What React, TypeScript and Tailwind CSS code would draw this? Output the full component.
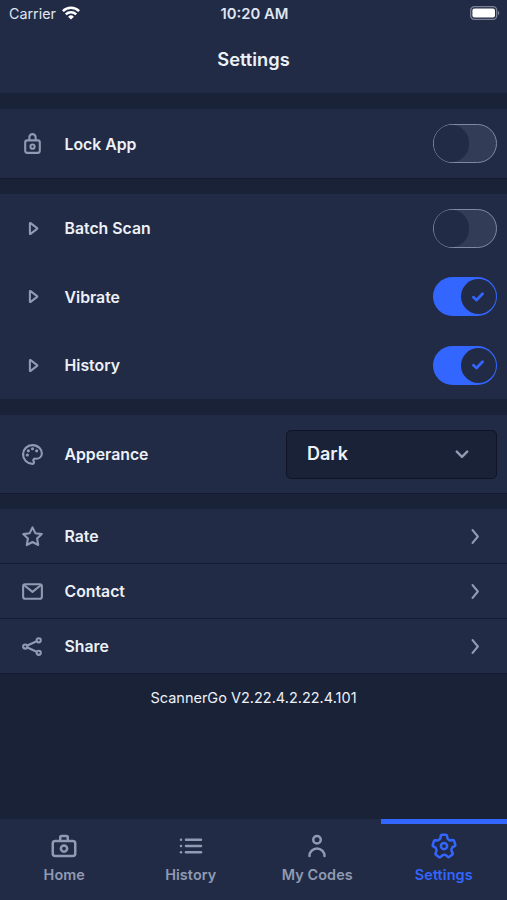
import React, { useState } from 'react';

type IconProps = { className?: string };

const LockIcon = () => (
  <svg viewBox="0 0 24 24" className="h-[25px] w-[25px]" fill="none" stroke="currentColor" strokeWidth="2">
    <rect x="5" y="9" width="14" height="12" rx="2" />
    <path d="M9 9V6a3 3 0 0 1 6 0v3" />
    <circle cx="12" cy="15" r="2" />
  </svg>
);

const PlayIcon = () => (
  <svg viewBox="0 0 24 24" className="h-[25px] w-[25px]" fill="none" stroke="currentColor" strokeWidth="2" strokeLinejoin="round">
    <path d="M9.5 7.2v9.6a.4.4 0 0 0 .7.3l6.2-4.7a.5.5 0 0 0 0-.8l-6.2-4.7a.4.4 0 0 0-.7.3z" />
  </svg>
);

const PaletteIcon = () => (
  <svg viewBox="0 0 24 24" className="h-[25px] w-[25px]" fill="currentColor">
    <path d="M19.54 5.08A10.61 10.61 0 0 0 11.91 2a10 10 0 0 0-.05 20 2.58 2.58 0 0 0 2.53-1.89 2.52 2.52 0 0 0-.57-2.28.5.5 0 0 1 .37-.83h1.65A6.15 6.15 0 0 0 22 11.33a8.48 8.48 0 0 0-2.46-6.25zM15.88 15h-1.65a2.49 2.49 0 0 0-1.87 4.15.49.49 0 0 1 .12.49c-.05.21-.28.34-.59.36a8 8 0 0 1-7.82-9.11A8.1 8.1 0 0 1 11.92 4H12a8.47 8.47 0 0 1 6.1 2.48 6.5 6.5 0 0 1 1.9 4.77A4.17 4.17 0 0 1 15.88 15z" />
    <circle cx="12" cy="6.5" r="1.5" />
    <circle cx="16" cy="8.5" r="1.5" />
    <circle cx="8" cy="8.5" r="1.5" />
    <circle cx="7" cy="12.5" r="1.5" />
  </svg>
);

const StarIcon = () => (
  <svg viewBox="0 0 24 24" className="h-[25px] w-[25px]" fill="none" stroke="currentColor" strokeWidth="2" strokeLinejoin="round">
    <path d="M12 3.2l2.7 5.6 6.2.9-4.5 4.3 1.1 6.2-5.5-2.9-5.5 2.9L7.6 14 3.1 9.7l6.2-.9z" />
  </svg>
);

const MailIcon = () => (
  <svg viewBox="0 0 24 24" className="h-[25px] w-[25px]" fill="none" stroke="currentColor" strokeWidth="2" strokeLinejoin="round">
    <rect x="3" y="5" width="18" height="14" rx="2" />
    <path d="M4 6l8 6.4L20 6" />
  </svg>
);

const ShareIcon = () => (
  <svg viewBox="0 0 24 24" className="h-[25px] w-[25px]" fill="none" stroke="currentColor" strokeWidth="2">
    <circle cx="5" cy="12" r="2" />
    <circle cx="18" cy="6" r="2" />
    <circle cx="18" cy="18" r="2" />
    <path d="M7 11.1l9-4.1M7 12.9l9 4.1" />
  </svg>
);

const CameraIcon = () => (
  <svg viewBox="0 0 24 24" className="h-[30px] w-[30px]" fill="none" stroke="currentColor" strokeWidth="2">
    <rect x="3" y="8" width="18" height="12" rx="2" />
    <path d="M9 8V5a1 1 0 0 1 1-1h4a1 1 0 0 1 1 1v3" />
    <circle cx="12" cy="14" r="2.5" />
  </svg>
);

const ListIcon = () => (
  <svg viewBox="0 0 24 24" className="h-[30px] w-[30px]" fill="currentColor">
    <circle cx="4" cy="7" r="1" />
    <circle cx="4" cy="12" r="1" />
    <circle cx="4" cy="17" r="1" />
    <rect x="7" y="6" width="14" height="2" rx=".94" />
    <rect x="7" y="11" width="14" height="2" rx=".94" />
    <rect x="7" y="16" width="14" height="2" rx=".94" />
  </svg>
);

const PersonIcon = () => (
  <svg viewBox="0 0 24 24" className="h-[30px] w-[30px]" fill="currentColor">
    <path d="M12 11a4 4 0 1 0-4-4 4 4 0 0 0 4 4zm0-6a2 2 0 1 1-2 2 2 2 0 0 1 2-2zM12 13a7 7 0 0 0-7 7 1 1 0 0 0 2 0 5 5 0 0 1 10 0 1 1 0 0 0 2 0 7 7 0 0 0-7-7z" />
  </svg>
);

const GearIcon = () => (
  <svg viewBox="0 0 24 24" className="h-[30px] w-[30px]" fill="currentColor">
    <path d="M8.61 22a2.25 2.25 0 0 1-1.35-.46L5.19 20a2.37 2.37 0 0 1-.49-3.22 2.06 2.06 0 0 0 .23-1.86l-.06-.16a1.83 1.83 0 0 0-1.12-1.22h-.16a2.34 2.34 0 0 1-1.48-2.94L2.93 8a2.18 2.18 0 0 1 1.12-1.41 2.14 2.14 0 0 1 1.68-.12 1.93 1.93 0 0 0 1.78-.29l.13-.1a1.94 1.94 0 0 0 .73-1.51v-.24A2.32 2.32 0 0 1 10.66 2h2.55a2.26 2.26 0 0 1 1.6.67 2.37 2.37 0 0 1 .68 1.68v.28a1.76 1.76 0 0 0 .69 1.43l.11.08a1.74 1.74 0 0 0 1.59.26l.34-.11A2.26 2.26 0 0 1 21.1 7.8l.79 2.52a2.36 2.36 0 0 1-1.46 2.93l-.2.07A1.89 1.89 0 0 0 19 14.6a2 2 0 0 0 .25 1.65l.26.38a2.38 2.38 0 0 1-.5 3.23L17 21.41a2.24 2.24 0 0 1-3.22-.53l-.12-.17a1.75 1.75 0 0 0-1.5-.78 1.8 1.8 0 0 0-1.43.77l-.23.33A2.25 2.25 0 0 1 9 22a2 2 0 0 1-.39 0zM4.4 11.62a3.83 3.83 0 0 1 2.38 2.5v.12a4 4 0 0 1-.46 3.62.38.38 0 0 0 0 .51L8.47 20a.25.25 0 0 0 .37-.07l.23-.33a3.77 3.77 0 0 1 6.2 0l.12.18a.3.3 0 0 0 .18.12.25.25 0 0 0 .19-.05l2.06-1.56a.36.36 0 0 0 .07-.49l-.26-.38A4 4 0 0 1 17.1 14a3.92 3.92 0 0 1 2.49-2.61l.2-.07a.34.34 0 0 0 .19-.44l-.78-2.49a.35.35 0 0 0-.2-.19.21.21 0 0 0-.19 0l-.34.11a3.74 3.74 0 0 1-3.43-.57L15 7.65a3.76 3.76 0 0 1-1.49-3v-.31a.37.37 0 0 0-.1-.26.31.31 0 0 0-.21-.08h-2.54a.31.31 0 0 0-.29.33v.25a3.9 3.9 0 0 1-1.52 3.09l-.13.1a3.91 3.91 0 0 1-3.63.59.22.22 0 0 0-.14 0 .28.28 0 0 0-.12.15L4 11.12a.36.36 0 0 0 .22.45z" />
    <path d="M12 15.5a3.5 3.5 0 1 1 3.5-3.5 3.5 3.5 0 0 1-3.5 3.5zm0-5a1.5 1.5 0 1 0 1.5 1.5 1.5 1.5 0 0 0-1.5-1.5z" />
  </svg>
);

const ChevronRight = ({ className }: IconProps) => (
  <svg viewBox="0 0 8 14" className={className} fill="none" stroke="currentColor" strokeWidth="2" strokeLinecap="round" strokeLinejoin="round">
    <path d="M1.3 1.1L6.2 7l-4.9 5.9" />
  </svg>
);

function StatusBar() {
  return (
    <div className="flex h-7 items-center pl-[9px] pr-[7px] text-[14.8px] text-[#dfe5f2]">
      <div className="flex flex-1 items-center gap-1.5">
        <span className="text-[14.3px]">Carrier</span>
        <svg viewBox="0 0 18 14" className="-mt-0.5 h-[14px] w-[18px]" fill="none" stroke="white" strokeWidth="2.5">
          <path d="M.9 5.1a11.6 11.6 0 0 1 16.2 0" />
          <path d="M3.8 8.3a7.4 7.4 0 0 1 10.4 0" />
          <path d="M9 13.6L6.1 10.7a4.2 4.2 0 0 1 5.8 0z" fill="white" stroke="none" />
        </svg>
      </div>
      <span className="font-semibold">10:20 AM</span>
      <div className="flex flex-1 justify-end">
        <svg viewBox="0 0 30 14" className="-mt-0.5 h-[14px] w-[30px]">
          <rect x=".7" y=".7" width="26" height="12.6" rx="3.6" fill="none" stroke="#7b8194" strokeWidth="1.3" />
          <rect x="2.4" y="2.4" width="22.6" height="9.2" rx="2" fill="white" />
          <path d="M28 4.8c1.8.8 1.8 3.6 0 4.4z" fill="#7b8194" />
        </svg>
      </div>
    </div>
  );
}

function Toggle({ checked, onChange }: { checked: boolean; onChange: () => void }) {
  if (checked) {
    return (
      <button
        type="button"
        onClick={onChange}
        className="flex h-[39px] w-16 items-center justify-end rounded-full bg-[#3366ff] pr-[1.5px]"
      >
        <span className="flex h-[35px] w-[35px] items-center justify-center rounded-full bg-[#222b45] text-[#3366ff]">
          <svg viewBox="0 0 12 10" className="h-[10px] w-3" fill="none" stroke="currentColor" strokeWidth="2.8" strokeLinecap="round" strokeLinejoin="round">
            <path d="M1.5 5.2l3 2.9 6-6.3" />
          </svg>
        </span>
      </button>
    );
  }

  return (
    <button
      type="button"
      onClick={onChange}
      className="flex h-[39px] w-16 items-center rounded-full border border-[#7d89a5] bg-[#333c56]"
    >
      <span className="h-[37px] w-[35px] rounded-full bg-[#222b45]" />
    </button>
  );
}

type RowProps = {
  icon: React.ReactNode;
  label: string;
  className: string;
  children: React.ReactNode;
};

function Row({ icon, label, className, children }: RowProps) {
  return (
    <div className={`flex items-center pl-5 ${className}`}>
      <span className="text-[#8f9bb3]">{icon}</span>
      <span className="ml-[19.5px] flex-1 pt-0.5 text-[15.8px] leading-6 font-semibold">{label}</span>
      {children}
    </div>
  );
}

export default function App() {
  const [lockApp, setLockApp] = useState(false);
  const [batchScan, setBatchScan] = useState(false);
  const [vibrate, setVibrate] = useState(true);
  const [history, setHistory] = useState(true);
  const [activeTab, setActiveTab] = useState('Settings');

  const links = [
    { label: 'Rate', icon: <StarIcon /> },
    { label: 'Contact', icon: <MailIcon /> },
    { label: 'Share', icon: <ShareIcon /> },
  ];

  const tabs = [
    { label: 'Home', icon: <CameraIcon /> },
    { label: 'History', icon: <ListIcon /> },
    { label: 'My Codes', icon: <PersonIcon /> },
    { label: 'Settings', icon: <GearIcon /> },
  ];

  return (
    <div className="flex h-screen flex-col bg-[#1a2238] font-['Inter',sans-serif] text-[#edf1f7]">
      <header className="h-[93px] bg-[#222b45]">
        <StatusBar />
        <h1 className="pt-[17px] text-center text-[18.3px] leading-7 font-semibold">Settings</h1>
      </header>

      <main className="flex flex-1 flex-col gap-[15px] pt-4">
        <section className="border-b border-[#151a30] bg-[#222b45]">
          <Row icon={<LockIcon />} label="Lock App" className="h-[69px] pr-2.5">
            <Toggle checked={lockApp} onChange={() => setLockApp(!lockApp)} />
          </Row>
        </section>

        {/* Scan options */}
        <section className="mb-px bg-[#222b45]">
          <Row icon={<PlayIcon />} label="Batch Scan" className="h-[68px] pr-2.5">
            <Toggle checked={batchScan} onChange={() => setBatchScan(!batchScan)} />
          </Row>
          <Row icon={<PlayIcon />} label="Vibrate" className="h-[69px] pr-2.5">
            <Toggle checked={vibrate} onChange={() => setVibrate(!vibrate)} />
          </Row>
          <Row icon={<PlayIcon />} label="History" className="h-[68px] pr-2.5">
            <Toggle checked={history} onChange={() => setHistory(!history)} />
          </Row>
        </section>

        <section className="border-b border-[#151a30] bg-[#222b45]">
          <Row icon={<PaletteIcon />} label="Apperance" className="h-[78px] pr-2.5">
            <button
              type="button"
              className="flex h-[49px] w-[211px] items-center justify-between rounded-[5px] border border-[#101426] bg-[#1a2238] pl-5 pr-[27px] text-lg font-semibold"
            >
              Dark
              <svg viewBox="0 0 14 9" className="h-[9px] w-3.5 text-[#8f9bb3]" fill="none" stroke="currentColor" strokeWidth="2.4" strokeLinecap="round" strokeLinejoin="round">
                <path d="M1.8 1.6L7 6.9l5.2-5.3" />
              </svg>
            </button>
          </Row>
        </section>

        <section className="bg-[#222b45]">
          {links.map((link) => (
            <Row key={link.label} icon={link.icon} label={link.label} className="h-[55px] border-b border-[#151a30] pr-[27px]">
              <ChevronRight className="h-[15px] w-[9px] text-[#8f9bb3]" />
            </Row>
          ))}
        </section>

        <p className="-mt-px text-center text-[14.5px] leading-5">ScannerGo V2.22.4.2.22.4.101</p>
      </main>

      {/* Bottom tabs */}
      <nav className="grid h-[81px] grid-cols-4 bg-[#222b45] pl-px">
        {tabs.map((tab) => (
          <button
            key={tab.label}
            type="button"
            onClick={() => setActiveTab(tab.label)}
            className={`flex flex-col items-center border-t-[5px] pt-[7px] text-[14.4px] leading-5 font-semibold tracking-[0.1px] ${
              activeTab === tab.label ? 'border-[#3366ff] text-[#3366ff]' : 'border-transparent text-[#8f9bb3]'
            }`}
          >
            {tab.icon}
            <span className="mt-1">{tab.label}</span>
          </button>
        ))}
      </nav>
    </div>
  );
}
